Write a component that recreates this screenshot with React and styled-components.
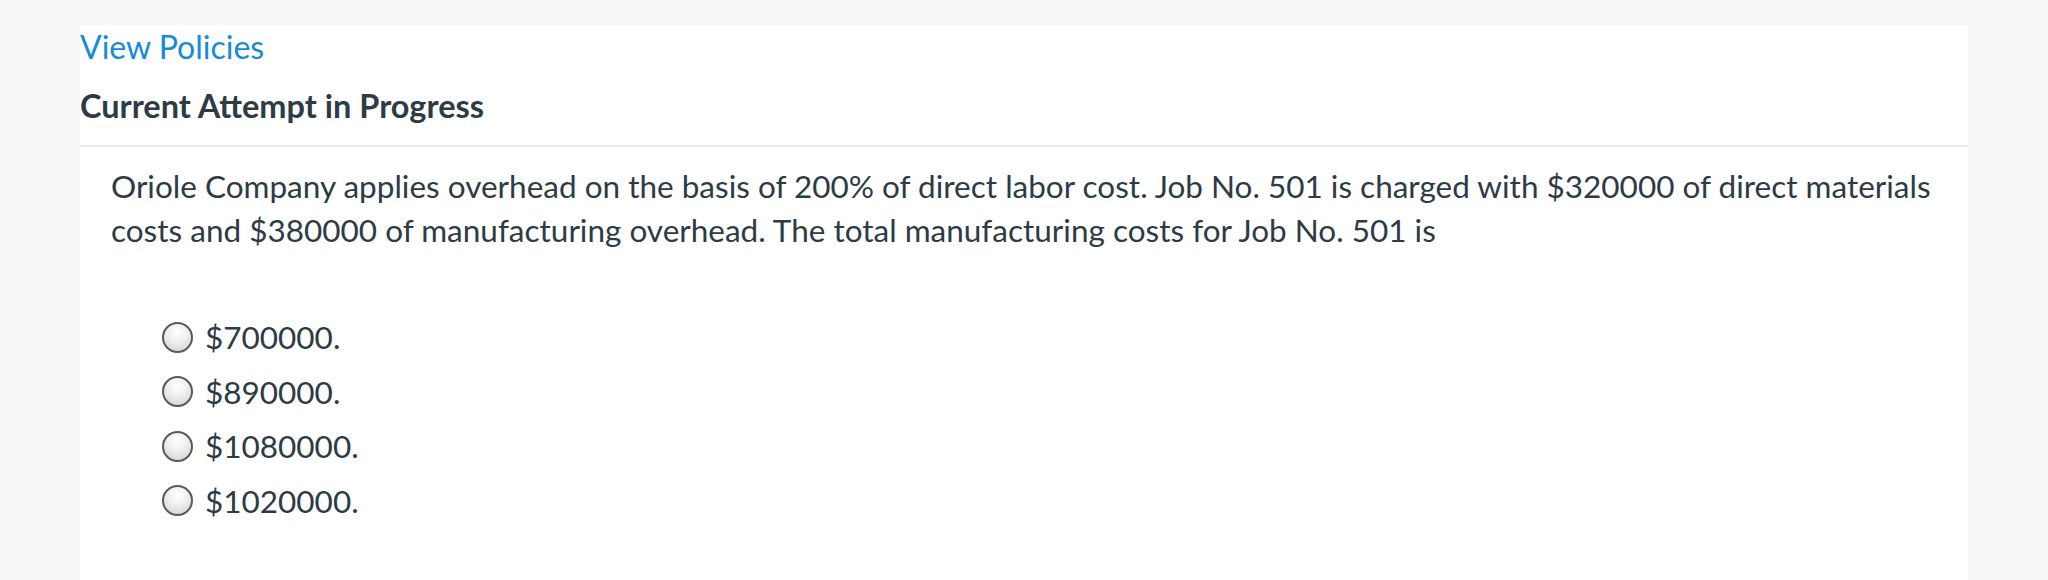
import React from "react";
import styled, { createGlobalStyle } from "styled-components";

const Global = createGlobalStyle`
  html, body { margin: 0; padding: 0; background: #f7f7f7; }
  body { font-family: Lato, "Open Sans", sans-serif; color: #2d3b45; }
`;

const Page = styled.div`
  padding: 25px 80px 0 80px;
  min-height: 580px;
  box-sizing: border-box;
  display: flex;
`;

const Panel = styled.main`
  flex: 1;
  background: #ffffff;
  min-height: 555px;
  display: flex;
  flex-direction: column;
`;

const Header = styled.header`
  display: flex;
  flex-direction: column;
  padding-top: 3px;
  border-bottom: 2px solid #e9e9e9;
  height: 122px;
  box-sizing: border-box;
`;

const PolicyLink = styled.a`
  font-size: 32px;
  line-height: 38px;
  color: #168bd7;
  text-decoration: none;
  align-self: flex-start;
`;

const Title = styled.h2`
  margin: 22px 0 0;
  font-size: 32.5px;
  line-height: 36px;
  font-weight: 700;
  color: #2d3b45;
`;

const Question = styled.section`
  padding: 17px 31px 0 31px;
`;

const Prompt = styled.p`
  margin: 0;
  font-size: 31.5px;
  line-height: 44px;
  color: #2d3b45;
`;

const Options = styled.ul`
  list-style: none;
  margin: 58px 0 0;
  padding: 0 0 0 51px;
  display: flex;
  flex-direction: column;
`;

const Option = styled.li`
  display: flex;
  align-items: center;
  gap: 12px;
  height: 54.5px;
  font-size: 31.5px;
  color: #2d3b45;
`;

const Radio = styled.input.attrs({ type: "radio" })`
  appearance: none;
  -webkit-appearance: none;
  margin: 0;
  width: 31px;
  height: 31px;
  border-radius: 50%;
  border: 2px solid #5a5a5a;
  background: radial-gradient(circle at 50% 30%, #ffffff 0%, #f0f0f0 40%, #cfcfcf 100%);
  box-sizing: border-box;
  flex: none;
`;

const choices = ["$700000.", "$890000.", "$1080000.", "$1020000."];

export default function App() {
  return (
    <>
      <Global />
      <Page>
        <Panel>
          <Header>
            <PolicyLink href="#">View Policies</PolicyLink>
            <Title>Current Attempt in Progress</Title>
          </Header>
          <Question>
            <Prompt>
              Oriole Company applies overhead on the basis of 200% of direct labor cost. Job No. 501 is charged with $320000 of direct materials costs and $380000 of manufacturing overhead. The total manufacturing costs for Job No. 501 is
            </Prompt>
            <Options>
              {choices.map((c) => (
                <Option key={c}>
                  <Radio name="answer" />
                  <span>{c}</span>
                </Option>
              ))}
            </Options>
          </Question>
        </Panel>
      </Page>
    </>
  );
}
